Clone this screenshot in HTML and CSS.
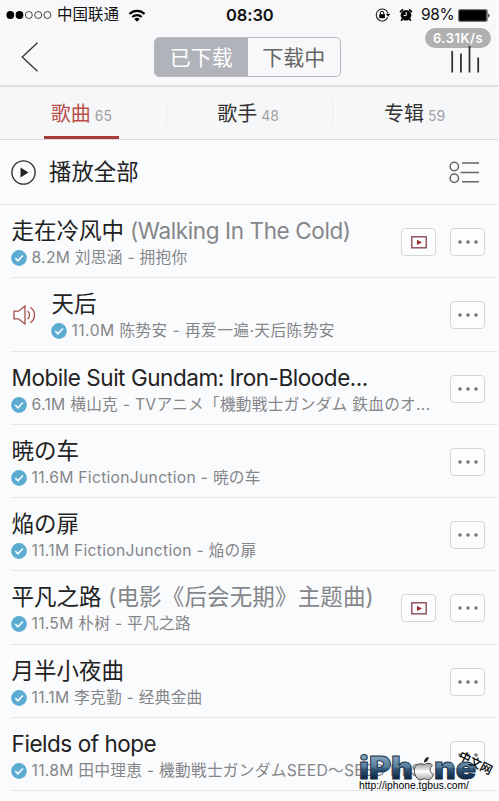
FILE: index.html
```html
<!DOCTYPE html>
<html lang="zh-CN">
<head>
<meta charset="utf-8">
<title>已下载</title>
<link rel="stylesheet" href="styles.css">
</head>
<body>
<svg class="defs" width="0" height="0">
  <symbol id="check" viewBox="0 0 16 16"><circle cx="8" cy="8" r="7.9" fill="#5bacd0"/><path d="M4.3 8.1l2.6 2.7 5-5.2" fill="none" stroke="#fff" stroke-width="1.5"/></symbol>
  <symbol id="mv" viewBox="0 0 16 13"><rect x=".8" y=".8" width="14.4" height="11" fill="none" stroke="#8b4a4e" stroke-width="1.4"/><path d="M6 3.7v5.4l5-2.7z" fill="#a02c30"/></symbol>
  <symbol id="dots" viewBox="0 0 22 6"><g fill="#777"><circle cx="3" cy="3" r="1.8"/><circle cx="11" cy="3" r="1.8"/><circle cx="19" cy="3" r="1.8"/></g></symbol>
</svg>
<div class="screen">
  <header class="status">
    <svg class="signal" width="46" height="10" viewBox="0 0 46 10"><g fill="#000"><circle cx="4.3" cy="5" r="3.9"/><circle cx="13.5" cy="5" r="3.9"/></g><g fill="none" stroke="#333" stroke-width=".9"><circle cx="22.8" cy="5" r="3.5"/><circle cx="32.2" cy="5" r="3.5"/><circle cx="41.4" cy="5" r="3.5"/></g></svg>
    <span class="carrier">中国联通</span>
    <svg class="wifi" width="18" height="13" viewBox="0 0 18 13"><g fill="none" stroke="#000" stroke-width="2.2"><path d="M1.5 5a10.6 10.6 0 0 1 15 0"/><path d="M4.3 8.1a6.6 6.6 0 0 1 9.4 0"/></g><path d="M6.3 10a3.8 3.8 0 0 1 5.4 0L9 12.8z"/></svg>
    <span class="clock">08:30</span>
    <svg class="lock" width="16" height="14" viewBox="0 0 16 14"><path d="M12.8 9.3A6 6 0 1 1 12.9 5" fill="none" stroke="#222" stroke-width="1.1"/><path d="M10.9 5.8h4.4l-2.2 3z"/><rect x="4.3" y="6.2" width="5.6" height="4"/><path d="M5.4 6.5V5a1.7 1.7 0 0 1 3.4 0v1.5" fill="none" stroke="#000" stroke-width="1"/></svg>
    <svg class="alarm" width="14" height="14" viewBox="0 0 14 14"><circle cx="7" cy="7.3" r="5.3"/><path d="M1 4.2L4 1.4M13 4.2l-3-2.8M3.5 11l-1.4 1.8M10.5 11l1.4 1.8" stroke="#000" stroke-width="1.7"/><path d="M7.2 4v3.6H4.6" fill="none" stroke="#fff" stroke-width="1"/></svg>
    <span class="percent">98%</span>
    <svg class="battery" width="33" height="13" viewBox="0 0 33 13"><rect x=".5" y=".5" width="28.8" height="12" rx="1.5" fill="#777" stroke="#777"/><rect x="1.2" y="1.2" width="27" height="10.6" rx="1"/><path d="M30.3 4.2q2.4 2.3 0 4.6z"/></svg>
  </header>
  <nav class="nav">
    <svg class="back" width="18" height="30" viewBox="0 0 18 30"><path d="M16.5 .7L1.2 15l15.3 14.3" fill="none" stroke="#333" stroke-width="1.3"/></svg>
    <div class="segment"><span class="on">已下载</span><span>下载中</span></div>
    <svg class="levels" width="29" height="27" viewBox="0 0 29 27"><g stroke="#333" stroke-width="1.8"><path d="M1.2 5v21.5M9.9 7.5v19M18.5 0v26.5M27.2 11.5v15"/></g></svg>
    <span class="speed">6.31K/s</span>
  </nav>
  <div class="tabs">
    <div class="tab active"><b>歌曲</b><i>65</i></div>
    <div class="tab"><b>歌手</b><i>48</i></div>
    <div class="tab"><b>专辑</b><i>59</i></div>
  </div>
  <div class="playall">
    <svg width="25" height="25" viewBox="0 0 25 25"><circle cx="12.5" cy="12.5" r="11.6" fill="none" stroke="#333" stroke-width="1.4"/><path d="M9.5 7.5v10l8-5z" fill="#222"/></svg>
    <span>播放全部</span>
    <svg class="manage" width="31" height="23" viewBox="0 0 31 23"><g fill="none" stroke="#666" stroke-width="1.5"><circle cx="5.3" cy="5.5" r="4.2"/><circle cx="5.3" cy="17.3" r="4.2"/><path d="M13 2h17M11.5 11.5H30M13 20.7h17"/></g></svg>
  </div>
  <ul class="songs">
    <li><div class="info"><h3>走在冷风中<em class="walk"> (Walking In The Cold)</em></h3><p><svg><use href="#check"/></svg><span>8.2M 刘思涵 - 拥抱你</span></p></div><span class="btn mv"><svg><use href="#mv"/></svg></span><span class="btn"><svg><use href="#dots"/></svg></span></li>
    <li class="playing"><svg class="speaker" width="24" height="20" viewBox="0 0 24 20"><g fill="none" stroke="#a8504c" stroke-width="1.3"><path d="M1 6.2h4.5L12 1v18l-6.5-5.2H1zM14.5 6a5 5 0 0 1 0 8M17.3 2.2a9.4 9.4 0 0 1 0 15.6"/></g></svg><div class="info"><h3>天后</h3><p><svg><use href="#check"/></svg><span>11.0M 陈势安 - 再爱一遍·天后陈势安</span></p></div><span class="btn"><svg><use href="#dots"/></svg></span></li>
    <li><div class="info"><h3 class="latin">Mobile Suit Gundam: Iron-Bloode...</h3><p lang="ja"><svg><use href="#check"/></svg><span>6.1M 横山克 - TVアニメ「機動戦士ガンダム 鉄血のオ...</span></p></div><span class="btn"><svg><use href="#dots"/></svg></span></li>
    <li lang="ja"><div class="info"><h3>暁の车</h3><p><svg><use href="#check"/></svg><span>11.6M FictionJunction - 暁の车</span></p></div><span class="btn"><svg><use href="#dots"/></svg></span></li>
    <li lang="ja"><div class="info"><h3>焔の扉</h3><p><svg><use href="#check"/></svg><span>11.1M FictionJunction - 焔の扉</span></p></div><span class="btn"><svg><use href="#dots"/></svg></span></li>
    <li><div class="info"><h3>平凡之路<em class="film"> (电影《后会无期》主题曲)</em></h3><p><svg><use href="#check"/></svg><span>11.5M 朴树 - 平凡之路</span></p></div><span class="btn mv"><svg><use href="#mv"/></svg></span><span class="btn"><svg><use href="#dots"/></svg></span></li>
    <li><div class="info"><h3>月半小夜曲</h3><p><svg><use href="#check"/></svg><span>11.1M 李克勤 - 经典金曲</span></p></div><span class="btn"><svg><use href="#dots"/></svg></span></li>
    <li><div class="info"><h3 class="latin">Fields of hope</h3><p lang="ja"><svg><use href="#check"/></svg><span>11.8M 田中理恵 - 機動戦士ガンダムSEED～SEED DES</span></p></div><span class="btn"><svg><use href="#dots"/></svg></span></li>
  </ul>
  <svg class="watermark" width="150" height="60" viewBox="0 0 150 60">
    <defs><linearGradient id="steel" x1="0" y1="0" x2="0" y2="1"><stop offset=".2" stop-color="#86a3b8"/><stop offset=".5" stop-color="#587f9e"/><stop offset=".55" stop-color="#34587a"/><stop offset=".8" stop-color="#102a45"/></linearGradient><linearGradient id="silver" x1="0" y1="0" x2="0" y2="1"><stop offset="0" stop-color="#999"/><stop offset=".5" stop-color="#fff"/><stop offset="1" stop-color="#aaa"/></linearGradient></defs>
    <g class="brand" fill="url(#steel)" stroke="#16304a" stroke-width=".9"><text x="10" y="38.5" textLength="54" lengthAdjust="spacingAndGlyphs">iPh</text><text x="85" y="38.5" textLength="42" lengthAdjust="spacingAndGlyphs">ne</text></g>
    <path d="M75.5 24.5c3-2 6-1.500 8 .8-3.500 2.500-3 7.500 1 9-1 3-3 5.500-5 5.500s-2.500-1-4.300-1-2.400 1-4.400 1c-3.700 0-7.500-9-4.300-13.500 2.500-3.300 5.500-2.800 9-1.800z" fill="url(#silver)" stroke="#333" stroke-width=".9"/><path d="M75 22.500c-.3-3 1.700-5 4.600-5.700 .2 3-1.600 5.500-4.600 5.700z" fill="#222"/>
    <text class="cn" transform="translate(108.500 18.500) rotate(27)">中文网</text>
    <text class="url" x="10" y="48.500" textLength="110" lengthAdjust="spacingAndGlyphs">http://iphone.tgbus.com/</text>
  </svg>
</div>
</body>
</html>
```
FILE: styles.css
```css
* { box-sizing: border-box; margin: 0; padding: 0; }
body { width: 499px; height: 801px; overflow: hidden; background: #fff; }
.defs { position: absolute; }
.screen { position: relative; width: 498px; height: 801px; overflow: hidden; background: #fafbfd; color: #222; font-family: Inter, "Noto Sans CJK SC", sans-serif; }
:lang(ja) { font-family: Inter, "Noto Sans CJK JP", sans-serif; }
svg { display: block; flex: none; }
.status { height: 30px; display: flex; align-items: center; padding-left: 6px; background: #f8f8fa; color: #111; font-size: 15.5px; line-height: 30px; }
.carrier { margin-left: 5px; width: 64px; white-space: nowrap; }
.wifi { margin-left: 7px; }
.clock { width: 50px; margin-left: 80px; font-size: 16.5px; font-weight: 600; letter-spacing: -.1px; }
.lock { margin-left: 99px; }
.alarm { margin-left: 8px; }
.percent { margin-left: 8px; width: 34px; font-size: 15.5px; letter-spacing: -.3px; }
.battery { margin-left: 3px; }
.nav { position: relative; height: 57px; display: flex; align-items: center; padding: 0 18px 3px 21px; background: #f8f8fa; border-bottom: 2px solid #dfdfe2; }
.back { margin-top: 2px; }
.segment { display: flex; width: 187px; height: 40px; margin: 2px 0 0 115px; border: 1.5px solid #b9babf; border-radius: 5px; overflow: hidden; }
.segment span { flex: 1; text-align: center; font-size: 21px; line-height: 40px; color: #666; }
.segment .on { background: #b1b3ba; color: #fff; }
.levels { position: relative; z-index: 1; margin-left: auto; margin-top: 6px; }
.speed { position: absolute; left: 425px; top: -2px; width: 66px; height: 20px; border-radius: 10px; background: #b0b0b1; color: #fff; font-size: 13px; font-weight: 600; line-height: 20px; text-align: center; letter-spacing: .5px; }
.tabs { display: flex; height: 53px; background: #f6f7f9; border-bottom: 1px solid #d9dade; }
.tab { flex: 1; display: flex; align-items: baseline; justify-content: center; position: relative; padding-right: 4px; }
.tab:last-child { padding-right: 2px; }
.tab:not(:last-child)::after { content: ""; position: absolute; right: 0; top: 14px; height: 23px; border-right: 1px solid #e9eaec; }
.tab b { font-weight: 400; font-size: 20px; line-height: 54px; color: #333; }
.tab i { font-style: normal; font-size: 14px; margin-left: 4px; color: #a0a1a5; }
.tab.active b { color: #b84f49; }
.tab.active::before { content: ""; position: absolute; left: 44px; bottom: 0; width: 75px; height: 3px; background: #a83e3a; }
.playall { display: flex; align-items: center; height: 65px; padding: 0 18px 0 11px; border-bottom: 1px solid #e2e4e7; }
.playall span { margin-left: 13px; font-size: 22.4px; line-height: 30px; }
.manage { margin-left: auto; }
.songs { list-style: none; }
.songs li { display: flex; height: 73.3px; margin-left: 11px; padding-right: 13px; border-bottom: 1px solid #e6e7ea; }
.info { flex: 1; min-width: 0; padding-top: 10px; white-space: nowrap; }
h3 { padding-left: .6px; font-size: 22.5px; line-height: 32px; font-weight: 400; }
h3.latin { letter-spacing: -.46px; }
h3 em { font-style: normal; color: #858689; }
.walk { letter-spacing: -.39px; }
.film { letter-spacing: .15px; }
p { display: flex; align-items: center; height: 22px; font-size: 15.7px; line-height: 22px; color: #858689; letter-spacing: .27px; }
.playing p { letter-spacing: .42px; }
p svg { width: 16px; height: 16px; margin-right: 4.5px; }
.speaker { margin: 27px 14px 0 2px; }
.btn { flex: none; display: flex; align-items: center; justify-content: center; width: 35px; height: 28px; margin-top: 23px; border: 1.4px solid #d4d6d8; border-radius: 4px; background: #fcfdfe; }
.btn.mv { margin-right: 14px; }
.btn svg { width: 22px; height: 6px; }
.btn.mv svg { width: 16px; height: 13px; }
.watermark { position: absolute; left: 349px; top: 740px; }
.brand { font: 900 31px Inter, sans-serif; }
.cn { font: 500 12px "Noto Sans CJK SC", sans-serif; }
.url { font: 11px "Liberation Sans", sans-serif; }
```
